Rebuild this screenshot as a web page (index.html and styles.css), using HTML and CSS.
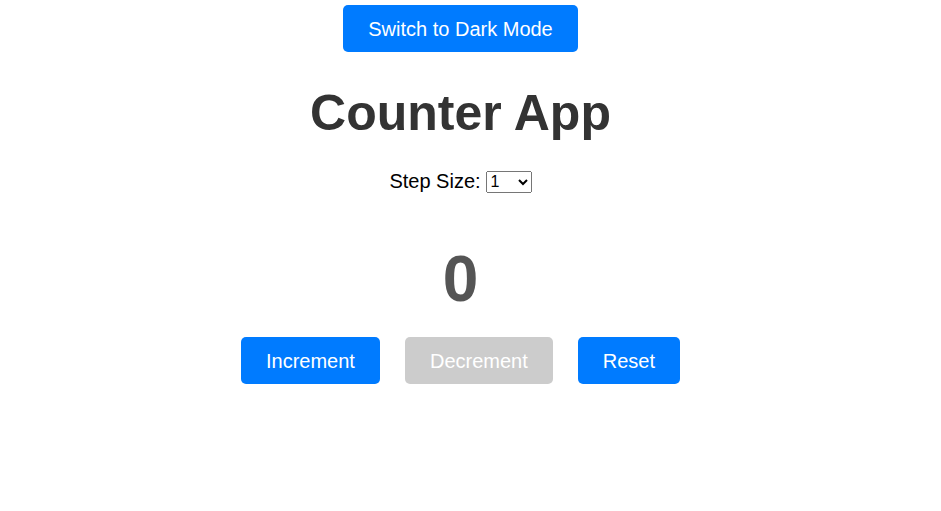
FILE: index.html
```html
<!DOCTYPE html>
<html lang="en">
<head>
<meta charset="utf-8">
<title>Counter App</title>
<link rel="stylesheet" href="styles.css">
</head>
<body>
<div class="app">
  <button class="btn toggle">Switch to Dark Mode</button>
  <h1 class="title">Counter App</h1>
  <div class="step">
    <label for="step">Step Size:</label>
    <select id="step" class="step-select">
      <option>1</option>
      <option>2</option>
      <option>5</option>
      <option>10</option>
    </select>
  </div>
  <div class="count">0</div>
  <div class="actions">
    <button class="btn">Increment</button>
    <button class="btn disabled" disabled>Decrement</button>
    <button class="btn">Reset</button>
  </div>
</div>
</body>
</html>
```
FILE: styles.css
```css
html, body {
  margin: 0;
  padding: 0;
  background: #ffffff;
}
body {
  font-family: "Liberation Sans", Arial, sans-serif;
}
.app {
  display: flex;
  flex-direction: column;
  align-items: center;
  padding-top: 5px;
  padding-right: 20px;
}
.btn {
  font-family: "Liberation Sans", Arial, sans-serif;
  font-size: 20px;
  line-height: 24px;
  padding: 12px 25px 11px;
  border: none;
  border-radius: 5px;
  background: #007bff;
  color: #ffffff;
  cursor: pointer;
}
.btn.disabled {
  background: #cccccc;
  color: #ffffff;
  cursor: not-allowed;
}
.title {
  margin: 32px 0 0;
  font-size: 50px;
  font-weight: bold;
  color: #333333;
  line-height: 58px;
}
.step {
  margin-top: 28px;
  font-size: 20px;
  line-height: 23px;
  color: #000000;
  display: flex;
  align-items: center;
  gap: 5px;
}
.step-select {
  font-family: "Liberation Sans", Arial, sans-serif;
  font-size: 16px;
  height: 22px;
  width: 46px;
}
.count {
  margin-top: 49px;
  font-size: 64px;
  font-weight: bold;
  color: #555555;
  line-height: 74px;
}
.actions {
  margin-top: 21px;
  display: flex;
  gap: 25px;
}
```
